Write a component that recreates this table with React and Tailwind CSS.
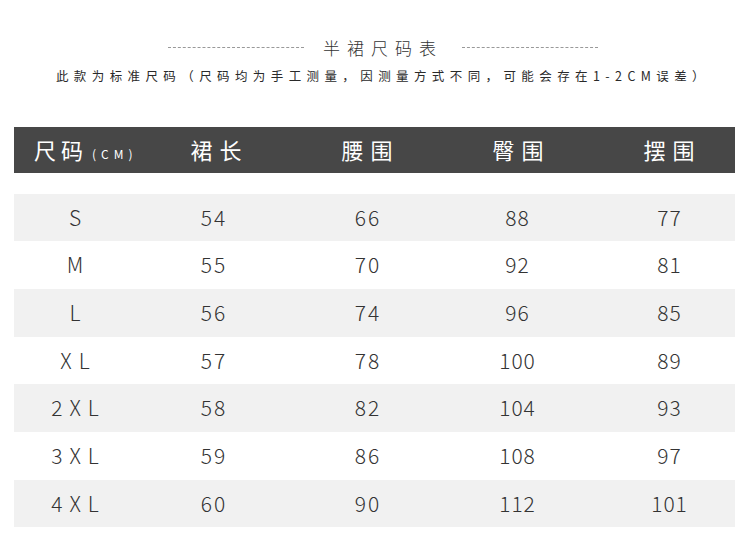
const rows = [
  ['S', '54', '66', '88', '77'],
  ['M', '55', '70', '92', '81'],
  ['L', '56', '74', '96', '85'],
  ['XL', '57', '78', '100', '89'],
  ['2XL', '58', '82', '104', '93'],
  ['3XL', '59', '86', '108', '97'],
  ['4XL', '60', '90', '112', '101'],
]

const font = { fontFamily: '"Noto Sans CJK SC", "Noto Sans", sans-serif' }

export default function App() {
  return (
    <div className="w-[750px] h-[556px] bg-white overflow-hidden" style={font}>
      {/* title */}
      <div className="flex items-center justify-center pt-[36px] h-[58px] pl-[16px]">
        <div className="w-[136px] border-t border-dashed border-[#999]" />
        <div className="mx-[19px] text-[17px] leading-none tracking-[7px] text-[#333] font-light">半裙尺码表</div>
        <div className="w-[136px] border-t border-dashed border-[#999]" />
      </div>
      <div className="mt-[12px] text-center text-[12.5px] leading-none tracking-[5.4px] text-[#2a2a2a] pl-[16px]">
        此款为标准尺码（尺码均为手工测量，因测量方式不同，可能会存在1-2CM误差）
      </div>

      {/* table */}
      <div className="mx-[14px] mt-[44px] w-[721px]">
        <div className="h-[46px] bg-[#474747] flex items-center text-white">
          <div className="w-[127px] shrink-0 pl-[20px] flex items-baseline">
            <span className="text-[22px] tracking-[5px]">尺码</span>
            <span className="text-[12px] tracking-[5px] ml-[4px]">(CM)</span>
          </div>
          <div className="w-[150px] shrink-0 text-center text-[22px] tracking-[7px] pl-[7px]">裙长</div>
          <div className="w-[152px] shrink-0 text-center text-[22px] tracking-[7px] pl-[7px]">腰围</div>
          <div className="w-[150px] shrink-0 text-center text-[22px] tracking-[7px] pl-[7px]">臀围</div>
          <div className="w-[152px] shrink-0 text-center text-[22px] tracking-[7px] pl-[7px]">摆围</div>
        </div>

        <div className="mt-[21px]">
          {rows.map((r, i) => (
            <div
              key={r[0]}
              className={`h-[47.7px] flex items-center text-[21px] font-light text-[#333] ${i % 2 === 0 ? 'bg-[#f1f1f1]' : 'bg-white'}`}
            >
              <div className="w-[122px] shrink-0 text-center tracking-[7px] pl-[7px]">{r[0]}</div>
              <div className="w-[154px] shrink-0 text-center tracking-[2px] pl-[2px]">{r[1]}</div>
              <div className="w-[154px] shrink-0 text-center tracking-[2px] pl-[2px]">{r[2]}</div>
              <div className="w-[146px] shrink-0 text-center tracking-[1px] pl-[1px]">{r[3]}</div>
              <div className="w-[145px] shrink-0 text-center tracking-[1px] pl-[14px]">{r[4]}</div>
            </div>
          ))}
        </div>
      </div>
    </div>
  )
}
